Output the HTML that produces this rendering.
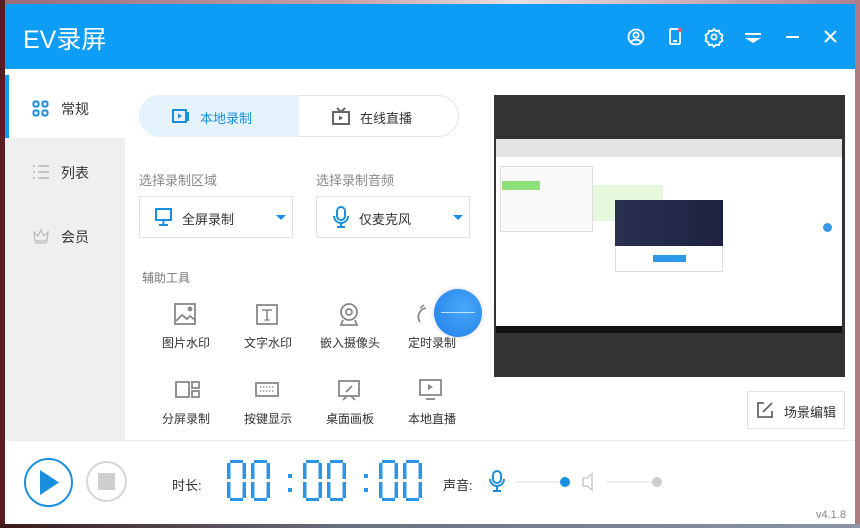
<!DOCTYPE html>
<html><head><meta charset="utf-8"><style>
*{margin:0;padding:0;box-sizing:border-box}
body{width:860px;height:528px;position:relative;overflow:hidden;background:#8a5a5a;font-family:"Liberation Sans","Noto Sans CJK SC",sans-serif;color:#333}
.a{position:absolute}
</style></head><body>
<div class="a" style="left:0;top:0;width:860px;height:5px;background:linear-gradient(90deg,#9a6b7a,#c8a0a8 40%,#e8e0e0 60%,#b08090)"></div>
<div class="a" style="left:0;top:0;width:5px;height:528px;background:#5a1e22"></div>
<div class="a" style="left:855px;top:0;width:5px;height:528px;background:#b07a80"></div>
<div class="a" style="left:0;top:524px;width:860px;height:4px;background:linear-gradient(90deg,#3a1a1a,#6a7080 40%,#8a96a8)"></div>
<div class="a" style="left:5px;top:4px;width:850px;height:520px;background:#fff"></div>
<div class="a" style="left:5px;top:4px;width:850px;height:65px;background:#0d9cf6"></div>
<div class="a" style="left:23px;top:20px;color:#fff;font-size:25px">EV录屏</div>
<svg class="a" style="left:625px;top:25px" width="220" height="24" fill="none" stroke="#fff" stroke-width="1.8">
<circle cx="11" cy="12" r="7.5"/><circle cx="11" cy="10" r="2.6"/><path d="M6 17c2-3 8-3 10 0"/>
<rect x="45" y="4" width="10" height="15" rx="1"/><path d="M48 16h4"/><circle cx="55" cy="5" r="2.2" fill="#f5506a" stroke="none"/>
<circle cx="89" cy="12" r="2.6"/><path d="M89 4l2 2.2 3-.5.8 2.8 2.7 1.5-1 2.9 1 2.9-2.7 1.5-.8 2.8-3-.5-2 2.2-2-2.2-3 .5-.8-2.8-2.7-1.5 1-2.9-1-2.9 2.7-1.5.8-2.8 3 .5z"/>
<path d="M120 9h16" stroke-width="2"/><path d="M120 13h16l-8 5z" fill="#fff" stroke="none"/>
<path d="M161 12h13" stroke-width="2"/>
<path d="M200 6l11 11M211 6l-11 11" stroke-width="2"/>
</svg>
<div class="a" style="left:5px;top:138px;width:120px;height:302px;background:#efefef"></div>
<div class="a" style="left:5px;top:75px;width:4px;height:63px;background:#0d9cf6"></div>
<svg class="a" style="left:32px;top:100px" width="18" height="18" fill="none" stroke="#1a8fe0" stroke-width="2"><rect x="1.5" y="1.5" width="5" height="5" rx="1.5"/><rect x="10.5" y="1.5" width="5" height="5" rx="1.5"/><rect x="1.5" y="10.5" width="5" height="5" rx="1.5"/><rect x="10.5" y="10.5" width="5" height="5" rx="1.5"/></svg>
<div class="a" style="left:61px;top:99px;font-size:14px">常规</div>
<svg class="a" style="left:32px;top:164px" width="18" height="16" stroke="#aaa" stroke-width="1.2"><path d="M1 2h2M6 2h11M1 8h2M6 8h11M1 14h2M6 14h11"/></svg>
<div class="a" style="left:61px;top:163px;font-size:14px">列表</div>
<svg class="a" style="left:32px;top:227px" width="18" height="18" fill="none" stroke="#bbb" stroke-width="1.2"><path d="M2 5l4 4 3-6 3 6 4-4-1 9H3z"/><path d="M3 16h12"/></svg>
<div class="a" style="left:61px;top:227px;font-size:14px">会员</div>
<div class="a" style="left:139px;top:95px;width:320px;height:42px;border:1px solid #e4e4e4;border-radius:21px;background:#fff"></div>
<div class="a" style="left:139px;top:95px;width:160px;height:42px;border-radius:21px 0 0 21px;background:#e5f3fd"></div>
<svg class="a" style="left:172px;top:108px" width="20" height="17" fill="none" stroke="#1a8fe0" stroke-width="2"><rect x="1" y="2" width="13" height="12"/><path d="M6 5.5l4 2.5-4 2.5z" fill="#1a8fe0" stroke="none"/><path d="M16 4v9"/></svg>
<div class="a" style="left:200px;top:108px;font-size:13px;color:#1a8fe0">本地录制</div>
<svg class="a" style="left:332px;top:107px" width="18" height="19" fill="none" stroke="#666" stroke-width="2"><path d="M5 1l4 4 4-4"/><rect x="1" y="5" width="16" height="12"/><path d="M7 8.5l4 2.5-4 2.5z" fill="#666" stroke="none"/></svg>
<div class="a" style="left:360px;top:108px;font-size:13px">在线直播</div>
<div class="a" style="left:139px;top:170px;font-size:13px;color:#888">选择录制区域</div>
<div class="a" style="left:316px;top:170px;font-size:13px;color:#888">选择录制音频</div>
<div class="a" style="left:139px;top:196px;width:154px;height:42px;border:1px solid #e2e2e2"></div>
<div class="a" style="left:316px;top:196px;width:154px;height:42px;border:1px solid #e2e2e2"></div>
<svg class="a" style="left:154px;top:207px" width="20" height="20" fill="none" stroke="#1a8fe0" stroke-width="2"><rect x="2" y="2" width="15" height="11"/><path d="M9.5 13v4M5 18h9"/></svg>
<div class="a" style="left:182px;top:209px;font-size:13px">全屏录制</div>
<svg class="a" style="left:275px;top:214px" width="12" height="7"><path d="M1 1h10l-5 5z" fill="#1a8fe0"/></svg>
<svg class="a" style="left:332px;top:206px" width="18" height="22" fill="none" stroke="#1a8fe0" stroke-width="2"><rect x="5" y="1" width="8" height="13" rx="4"/><path d="M2 10a7 7 0 0014 0M9 17v3M5 21h8"/></svg>
<div class="a" style="left:359px;top:209px;font-size:13px">仅麦克风</div>
<svg class="a" style="left:452px;top:214px" width="12" height="7"><path d="M1 1h10l-5 5z" fill="#1a8fe0"/></svg>
<div class="a" style="left:142px;top:269px;font-size:12px;color:#777">辅助工具</div>
<svg class="a" style="left:130px;top:300px" width="330" height="110" fill="none" stroke="#888" stroke-width="1.8">
<rect x="45" y="4" width="20" height="20"/><path d="M46 21l6-6 5 4 3-3 5 4"/><circle cx="60" cy="9" r="1.5" fill="#888"/>
<rect x="127" y="5" width="20" height="19"/><path d="M132 10h10M137 10v10M134.5 20h5" stroke-width="1.6"/>
<circle cx="219" cy="12" r="8"/><circle cx="219" cy="12" r="3"/><path d="M213 20l-2 5h16l-2-5"/>
<path d="M290 8l4-3" stroke-width="1.6"/><path d="M290 22a9 9 0 016-14"/>
<rect x="46" y="82" width="13" height="15"/><rect x="62" y="82" width="7" height="6"/><rect x="62" y="91" width="7" height="6"/>
<rect x="126" y="83" width="22" height="13"/><path d="M130 87h14M130 91h14" stroke-dasharray="1.5 1.5" stroke-width="1.2"/>
<rect x="209" y="81" width="20" height="15"/><path d="M213 100l4-4M225 100l-4-4M216 92l6-6" />
<rect x="290" y="80" width="21" height="15"/><path d="M298 84l5 3-5 3z" fill="#888" stroke="none"/><path d="M296 99h9"/>
</svg>
<div class="a" style="left:162px;top:334px;font-size:12px">图片水印</div>
<div class="a" style="left:244px;top:334px;font-size:12px">文字水印</div>
<div class="a" style="left:320px;top:334px;font-size:12px">嵌入摄像头</div>
<div class="a" style="left:408px;top:334px;font-size:12px">定时录制</div>
<div class="a" style="left:162px;top:410px;font-size:12px">分屏录制</div>
<div class="a" style="left:244px;top:410px;font-size:12px">按键显示</div>
<div class="a" style="left:326px;top:410px;font-size:12px">桌面画板</div>
<div class="a" style="left:408px;top:410px;font-size:12px">本地直播</div>
<div class="a" style="left:434px;top:289px;width:48px;height:48px;border-radius:50%;background:radial-gradient(circle at 60% 40%,#4aa8f8,#1e7ee8);box-shadow:0 0 4px #ccd"></div>
<div class="a" style="left:441px;top:312px;width:34px;height:1px;background:#bfe0ff"></div>
<div class="a" style="left:494px;top:95px;width:351px;height:282px;background:#333"></div>
<div class="a" style="left:496px;top:139px;width:346px;height:187px;background:#fff"></div>
<div class="a" style="left:496px;top:139px;width:346px;height:18px;background:#e4e4e4"></div>
<div class="a" style="left:500px;top:166px;width:93px;height:66px;border:1px solid #ddd;background:#fafafa"></div>
<div class="a" style="left:502px;top:181px;width:38px;height:9px;background:#8ee07a"></div>
<div class="a" style="left:593px;top:185px;width:70px;height:36px;background:#e6f8de"></div>
<div class="a" style="left:615px;top:200px;width:108px;height:72px;background:#fff;border:1px solid #ddd"></div>
<div class="a" style="left:615px;top:200px;width:108px;height:46px;background:linear-gradient(90deg,#2a3050,#1e2240)"></div>
<div class="a" style="left:653px;top:255px;width:33px;height:7px;background:#2a9ae8"></div>
<div class="a" style="left:823px;top:223px;width:9px;height:9px;border-radius:50%;background:#3a9ae8"></div>
<div class="a" style="left:496px;top:326px;width:346px;height:7px;background:#111"></div>
<div class="a" style="left:747px;top:391px;width:98px;height:38px;border:1px solid #e2e2e2"></div>
<svg class="a" style="left:756px;top:401px" width="18" height="18" fill="none" stroke="#666" stroke-width="1.8"><path d="M8 2H2v14h14v-6M7 11l9-9"/></svg>
<div class="a" style="left:784px;top:402px;font-size:13px">场景编辑</div>
<div class="a" style="left:5px;top:440px;width:850px;height:1px;background:#eee"></div>
<div class="a" style="left:24px;top:458px;width:49px;height:49px;border-radius:50%;border:2px solid #1a8fe0"></div>
<svg class="a" style="left:38px;top:469px" width="24" height="28"><path d="M2 1l19 12.5L2 26z" fill="#1a8fe0"/></svg>
<div class="a" style="left:86px;top:461px;width:41px;height:41px;border-radius:50%;border:2px solid #d6d6d6"></div>
<div class="a" style="left:98px;top:473px;width:17px;height:17px;background:#cfcfcf"></div>
<div class="a" style="left:172px;top:475px;font-size:13px">时长:</div>
<svg class="a" style="left:220px;top:460px" width="210" height="44" fill="#2a96e8">
<defs><g id="z"><rect x="0" y="3" width="3.5" height="16"/><rect x="0" y="22" width="3.5" height="16"/><rect x="15.5" y="3" width="3.5" height="16"/><rect x="15.5" y="22" width="3.5" height="16"/><rect x="3" y="0" width="13" height="3"/><rect x="3" y="38" width="13" height="3"/></g></defs>
<use href="#z" x="7"/><use href="#z" x="31"/>
<rect x="68" y="14" width="4" height="4"/><rect x="68" y="28" width="4" height="4"/>
<use href="#z" x="83"/><use href="#z" x="107"/>
<rect x="144" y="14" width="4" height="4"/><rect x="144" y="28" width="4" height="4"/>
<use href="#z" x="159"/><use href="#z" x="183"/>
</svg>
<div class="a" style="left:443px;top:475px;font-size:13px">声音:</div>
<svg class="a" style="left:488px;top:470px" width="180" height="26"><g fill="none" stroke="#1a8fe0" stroke-width="2"><rect x="5" y="1" width="8" height="12" rx="4"/><path d="M2 9a7 7 0 0014 0M9 16v4M5 21h8"/></g>
<path d="M27 12h50" stroke="#ddd"/><circle cx="77" cy="12" r="5" fill="#1a8fe0"/>
<path d="M95 8h4l5-4v16l-5-4h-4z" fill="none" stroke="#ccc" stroke-width="1.5"/>
<path d="M118 12h50" stroke="#ddd"/><circle cx="169" cy="12" r="5" fill="#ccc"/></svg>
<div class="a" style="left:816px;top:509px;font-size:11px;color:#888">v4.1.8</div>
</body></html>
